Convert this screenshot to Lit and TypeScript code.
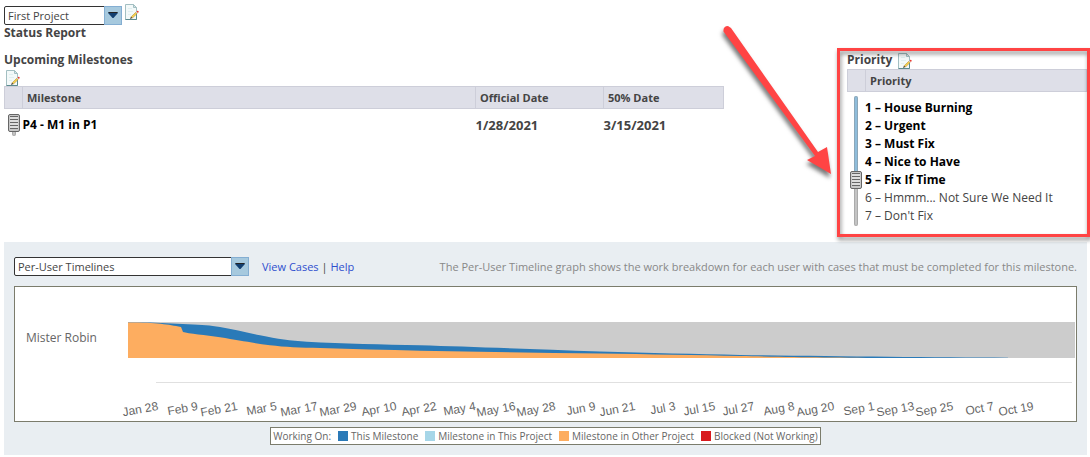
import { LitElement, html, css, svg } from "lit";
import { customElement, property } from "lit/decorators.js";

const sans = css`"Open Sans", "Noto Sans", sans-serif`;

const PRIORITIES = [
  "House Burning",
  "Urgent",
  "Must Fix",
  "Nice to Have",
  "Fix If Time",
  "Hmmm... Not Sure We Need It",
  "Don't Fix",
];

const DATES = [
  "Jan 28", "Feb 9", "Feb 21", "Mar 5", "Mar 17", "Mar 29", "Apr 10", "Apr 22",
  "May 4", "May 16", "May 28", "Jun 9", "Jun 21", "Jul 3", "Jul 15", "Jul 27",
  "Aug 8", "Aug 20", "Sep 1", "Sep 13", "Sep 25", "Oct 7", "Oct 19",
];

const LEGEND = [
  { name: "This Milestone", tone: "this" },
  { name: "Milestone in This Project", tone: "project-key" },
  { name: "Milestone in Other Project", tone: "other" },
  { name: "Blocked (Not Working)", tone: "blocked" },
];

@customElement("edit-button")
class EditButton extends LitElement {
  @property() label = "Edit";

  static styles = css`
    :host { display: inline-flex; }
    button { display: block; padding: 0; border: 0; background: none; cursor: pointer; }
    svg { display: block; }
  `;

  render() {
    return html`<button aria-label=${this.label}>
      <svg width="16" height="16" viewBox="0 0 16 16">
        <path d="M.5.5h8l3 3v12H.5z" fill="#f3f9f9" stroke="#a3bfc2" />
        <path d="M.5 15.500h11V9" fill="none" stroke="#5b8a8e" />
        <path d="M8.500.5v3h3z" fill="#d3e6e8" stroke="#a3bfc2" />
        <path d="M3 4.500h4M3 7.500h5M3 10.500h3" stroke="#e0eff0" />
        <path d="M6.200 12.700l4.600-4.400 1.300 1.300-4.600 4.400z" fill="#f8d24c" stroke="#a8802c" stroke-width=".5" />
        <path d="M5 15l1-2.300 1.400 1.300z" fill="#3a3020" />
        <path d="M10.800 8.200l.7-.7 1.400 1.400-.7.7z" fill="#d8dde0" />
        <path d="M11.500 7.400l.9-.7q1.400 0 1.300 1.400l-.8.8z" fill="#e8392f" />
      </svg>
    </button>`;
  }
}

@customElement("combo-box")
class ComboBox extends LitElement {
  @property() label = "";
  @property() value = "";

  static styles = css`
    .box { display: grid; grid-template-columns: minmax(0, 1fr) 18px; height: 20px; }
    select {
      grid-area: 1 / 1 / 2 / 3; appearance: none; width: 100%; height: 19px;
      box-sizing: border-box; margin: 0; padding: 0 20px 0 3px;
      border: 1px solid #333; border-radius: 2px; background: #fff; color: #444;
      font: 11px/16px ${sans};
    }
    .arrow { grid-area: 1 / 2 / 2 / 3; pointer-events: none; position: relative; height: 19px; }
  `;

  render() {
    return html`<div class="box">
      <select aria-label=${this.label}><option>${this.value}</option></select>
      <svg class="arrow" width="18" height="19" viewBox="0 0 18 19">
        <rect x=".5" y=".5" width="17" height="18" fill="#a6c9de" stroke="#84aed2" />
        <path d="M4.500 6h9v1.500L9.500 12h-1L4.500 7.500z" fill="#123f70" />
        <path d="M4.500 6h9v1h-9z" fill="#222" />
      </svg>
    </div>`;
  }
}

@customElement("app-root")
class AppRoot extends LitElement {
  static styles = css`
    :host { display: block; position: relative; padding: 4px 3px 2px 4px; background: #fff; color: #444; font: 12px/18px ${sans}; }
    * { box-sizing: border-box; }
    h1, h2 { margin: 0; font-size: 12px; line-height: 18px; font-weight: 700; }
    .project { display: flex; gap: 3px; height: 20px; padding-top: 2px; }
    .project combo-box { width: 118px; }
    .project edit-button { align-self: flex-start; margin-top: -2px; }
    .top { display: grid; grid-template-columns: 3fr 1fr; column-gap: 123px; height: 191px; margin-top: 9px; }
    .left edit-button { display: flex; margin: 1px 0 0 2px; }
    table { width: 100%; border-collapse: collapse; table-layout: fixed; }
    th {
      height: 22px; padding: 0 0 0 4px; text-align: left; font-size: 11px; line-height: 18px; font-weight: 700;
      background: #dedfe8; border: 1px solid #cdced9;
    }
    td { padding: 0; height: 32px; font-weight: 700; }
    .grip { width: 18px; }
    .date { width: 128px; }
    .half { width: 120px; }
    .name { color: #000; }
    .day { font-size: 13px; }
    .priority-title { display: flex; gap: 6px; }
    .priority-title edit-button { align-self: flex-end; }
    .levels { display: flex; padding-top: 4px; }
    ol { list-style: none; margin: 3px 0 0; padding: 0; }
    li { white-space: nowrap; }
    .on { color: #000; font-weight: 700; }
    input { appearance: none; writing-mode: vertical-lr; margin: 0; background: none; width: 18px; display: block; }
    .scale { height: 130px; }
    .single { height: 22px; }
    input::-webkit-slider-runnable-track { width: 4px; margin: 0 auto; border-radius: 2px; background: linear-gradient(#8fbddb 65%, #c4c4c4 65%); box-shadow: inset 0 0 0 1px #8886; }
    input::-webkit-slider-thumb {
      appearance: none; width: 12px; height: 18px; margin-left: -4px; border: 1px solid #666; border-radius: 2px;
      background: repeating-linear-gradient(#666 0 1px, #ddd 1px 3px) center / 8px 13px no-repeat, #c8c8c8;
    }
    .panel { background: #e9eef2; padding: 15px 10px 10px; }
    .tools { display: flex; align-items: flex-start; white-space: nowrap; }
    .tools combo-box { width: 235px; margin-right: 13px; }
    a { color: #2f4fce; text-decoration: none; }
    .hint { margin: 0 0 0 auto; color: #888; font-size: 11px; line-height: 20px; }
    .links { font-size: 11px; line-height: 20px; }
    .chart { margin-top: 9px; height: 136px; padding: 35px 1px 0 0; border: 1px solid #7b7c6c; background: #fff; }
    .plot { display: grid; grid-template-columns: 113px minmax(0, 1fr); align-items: center; color: #666; }
    .plot svg { display: block; width: 100%; height: 36px; }
    .user { padding: 0 0 4px 11px; }
    .axis { margin: 24px 3px 0 141px; border-top: 1px solid #e0e0e0; }
    .dates { display: grid; grid-template-columns: repeat(23, minmax(0, 1fr)); margin: 15px 42px 0 103px; font: 12px/16px "Liberation Sans", sans-serif; color: #666; }
    .dates span { justify-self: end; white-space: nowrap; transform: rotate(-10deg); transform-origin: right center; }
    .legend { display: flex; width: max-content; height: 18px; margin: 5px auto 0; padding: 0 2px; gap: 7px; border: 1px solid #7b7c6c; background: #fff; color: #666; font-size: 10px; line-height: 16px; }
    .key { display: flex; align-items: center; gap: 3px; }
    .key::before { content: ""; width: 10px; height: 10px; }
    .this::before { background: #2a7ab8; }
    .project-key::before { background: #a6d6e8; }
    .other::before { background: #fdad60; }
    .blocked::before { background: #d81a1e; }
    .frame { position: absolute; top: 48px; right: 0; width: 253px; height: 189px; border: 3px solid #ff4444; pointer-events: none; filter: drop-shadow(1px 3px 2px #0007); }
    .pointer { position: absolute; top: 20px; right: 250px; pointer-events: none; filter: drop-shadow(-1px 4px 2px #0008); }
  `;

  render() {
    return html`
      <div class="project">
        <combo-box label="Project" value="First Project"></combo-box>
        <edit-button label="Edit project"></edit-button>
      </div>
      <h1>Status Report</h1>
      <div class="top">
        <section class="left">
          <h2>Upcoming Milestones</h2>
          <edit-button label="Edit milestones"></edit-button>
          <table>
            <thead>
              <tr><th class="grip"></th><th>Milestone</th><th class="date">Official Date</th><th class="half">50% Date</th></tr>
            </thead>
            <tbody>
              <tr>
                <td><input class="single" type="range" aria-label="Milestone" min="0" max="1" value="0" /></td>
                <td class="name">P4 - M1 in P1</td><td class="day">1/28/2021</td><td class="day">3/15/2021</td>
              </tr>
            </tbody>
          </table>
        </section>
        <section>
          <div class="priority-title"><h2>Priority</h2><edit-button label="Edit priorities"></edit-button></div>
          <table>
            <thead><tr><th class="grip"></th><th>Priority</th></tr></thead>
          </table>
          <div class="levels">
            <input class="scale" type="range" aria-label="Lowest priority" min="1" max="7" value="5" />
            <ol>${PRIORITIES.map((p, i) => html`<li class=${i < 5 ? "on" : ""}>${i + 1} – ${p}</li>`)}</ol>
          </div>
        </section>
      </div>
      <section class="panel">
        <div class="tools">
          <combo-box label="Report" value="Per-User Timelines"></combo-box>
          <span class="links"><a href="#cases">View Cases</a> | <a href="#help">Help</a></span>
          <p class="hint">The Per-User Timeline graph shows the work breakdown for each user with cases that must be completed for this milestone.</p>
        </div>
        <div class="chart">
          <div class="plot">
            <span class="user">Mister Robin</span>
            ${this.timeline()}
          </div>
          <div class="axis"></div>
          <div class="dates">${DATES.map((d) => html`<span>${d}</span>`)}</div>
        </div>
        <div class="legend">
          <span>Working On:</span>
          ${LEGEND.map((k) => html`<span class="key ${k.tone}">${k.name}</span>`)}
        </div>
      </section>
      <div class="frame"></div>
      <svg class="pointer" width="120" height="160" viewBox="720 20 120 160">
        <path d="M723.500 31.500Q723 26 728 26l3 2 87 124 9-5 4 27-24-14 8-4z" fill="#ff4444" />
      </svg>
    `;
  }

  private timeline() {
    return html`<svg viewBox="0 0 947 36" preserveAspectRatio="none">
      ${svg`
        <rect width="947" height="36" fill="#ccc" />
        <path d="M0 .5H22L60 2.300C75 3 82 3.500 92 5C106 7.200 118 10.500 132 13.300C150 17 162 18.700 179 19.700C215 21.600 255 22.300 292 23.300C340 24.700 400 27 472 29.500C520 31 570 32 612 33C700 34.300 800 35.300 880 35.700V36H0Z" fill="#2a7ab8" />
        <path d="M0 .5C30 .5 40 2.500 53 5L55 10C60 11.500 78 13.200 92 15.300C112 18.500 125 21 142 23.200C157 25 172 25.500 192 26C225 27 258 28 292 28.700C350 29.700 410 30.700 472 31.600C520 32.300 570 33.400 612 34C670 35 700 35.500 770 36H0Z" fill="#fdad60" />`}
    </svg>`;
  }
}
